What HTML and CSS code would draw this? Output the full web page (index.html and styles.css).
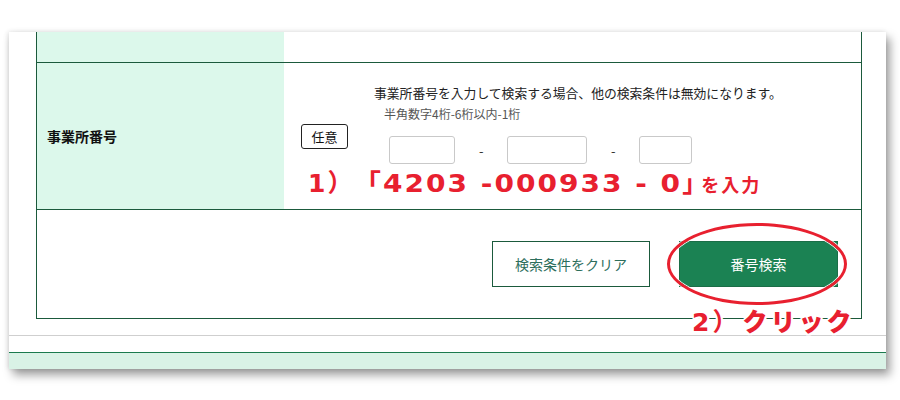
FILE: index.html
```html
<!DOCTYPE html>
<html lang="ja">
<head>
<meta charset="utf-8">
<link rel="stylesheet" href="styles.css">
</head>
<body>
<div class="card">
  <div class="table">
    <div class="row row-top">
      <div class="label"></div>
      <div class="value"></div>
    </div>
    <div class="row row-main">
      <div class="label"><span class="label-text">事業所番号</span></div>
      <div class="value value-main">
        <span class="badge">任意</span>
        <div class="field">
          <p class="note">事業所番号を入力して検索する場合、他の検索条件は無効になります。</p>
          <p class="hint">半角数字4桁-6桁以内-1桁</p>
          <div class="inputs">
            <span class="box box-a"></span>
            <span class="dash">-</span>
            <span class="box box-b"></span>
            <span class="dash">-</span>
            <span class="box box-c"></span>
          </div>
        </div>
      </div>
    </div>
    <div class="actions">
      <button class="btn btn-clear">検索条件をクリア</button>
      <button class="btn btn-search">番号検索</button>
    </div>
  </div>
  <div class="sep"></div>
  <div class="footer"></div>

  <div class="anno anno-1">1）<span class="anno-code">「4203 -000933 - 0</span><span class="anno-close">」</span><span class="anno-small">を入力</span></div>
  <div class="ring"></div>
  <div class="anno anno-2">2）<span class="anno-kana">クリック</span></div>
</div>
</body>
</html>
```

FILE: styles.css
```css
html, body {
  margin: 0;
  padding: 0;
  background: #ffffff;
}

body {
  width: 900px;
  height: 400px;
  overflow: hidden;
  font-family: "Noto Sans CJK JP", "Noto Sans", sans-serif;
  color: #222;
}

.card {
  position: relative;
  margin: 32px 0 0 9px;
  width: 877px;
  height: 337px;
  background: #fff;
  box-shadow: 4px 6px 9px rgba(0, 0, 0, 0.38), -1px 0 5px rgba(0, 0, 0, 0.12);
  display: flex;
  flex-direction: column;
}

.table {
  margin: 0 24px 0 27px;
  border: 1px solid #1b5a3c;
  border-top: none;
}

.row {
  display: grid;
  grid-template-columns: 247px 1fr;
  border-bottom: 1px solid #1b5a3c;
}

.row-top { height: 30px; }
.row-main { height: 146px; }

.label {
  background: #dcf8eb;
  display: flex;
  align-items: center;
  padding-left: 10px;
}

.label-text {
  font-size: 14px;
  font-weight: bold;
  color: #111;
}

.value-main {
  display: flex;
  align-items: center;
  padding-left: 17px;
}

.badge {
  box-sizing: border-box;
  width: 47px;
  height: 25px;
  border: 1px solid #222;
  border-radius: 3px;
  font-size: 13px;
  line-height: 23px;
  text-align: center;
  color: #111;
  margin-top: 1px;
}

.field {
  margin-left: 26px;
  align-self: flex-start;
  padding-top: 20px;
}

.note {
  margin: 0;
  font-size: 12.8px;
  line-height: 20px;
  color: #222;
  white-space: nowrap;
}

.hint {
  margin: 1px 0 0 10px;
  font-size: 12px;
  line-height: 20px;
  color: #555;
}

.inputs {
  display: flex;
  align-items: center;
  margin: 12px 0 0 15px;
  gap: 24px;
}

.box {
  box-sizing: border-box;
  height: 28px;
  border: 1px solid #c9c9c9;
  border-radius: 3px;
  background: #fff;
}

.box-a { width: 66px; }
.box-b { width: 80px; }
.box-c { width: 53px; }

.dash {
  font-size: 13px;
  color: #333;
  width: 4px;
}

.actions {
  height: 108px;
  display: flex;
  justify-content: flex-end;
  align-items: center;
  gap: 29px;
  padding-right: 23px;
}

.btn {
  box-sizing: border-box;
  width: 159px;
  height: 46px;
  font-family: "Noto Sans CJK JP", sans-serif;
  font-size: 14px;
  border-radius: 0;
  cursor: pointer;
}

.btn-clear {
  width: 158px;
  background: #fff;
  border: 1px solid #1b5a3c;
  color: #2d6e5c;
}

.btn-search {
  background: #1b8253;
  border: 1px solid #1b6e47;
  color: #fff;
}

.sep {
  margin-top: 16px;
  height: 1px;
  background: #cfcfcf;
}

.footer {
  margin-top: 16px;
  flex: 1;
  border-top: 1px solid #1b7a4e;
  background: #d9f2e6;
}

.anno {
  position: absolute;
  color: #e8202f;
  font-family: "DejaVu Sans", "Noto Sans CJK JP", sans-serif;
  font-weight: bold;
  white-space: nowrap;
  text-shadow:
    2px 0 0 #fff, -2px 0 0 #fff, 0 2px 0 #fff, 0 -2px 0 #fff,
    1.5px 1.5px 0 #fff, -1.5px 1.5px 0 #fff, 1.5px -1.5px 0 #fff, -1.5px -1.5px 0 #fff;
}

.anno-1 {
  left: 299px;
  top: 137px;
  font-size: 25px;
  line-height: 30px;
  letter-spacing: 2px;
}

.anno-code {
  display: inline-block;
  margin-left: -1px;
  margin-right: 35px;
  letter-spacing: 1.8px;
  transform: scaleX(1.12);
  transform-origin: left center;
}

.anno-close {
  letter-spacing: -6px;
}

.anno-small {
  font-size: 18px;
  letter-spacing: 2px;
}

.anno-2 {
  left: 683px;
  top: 276px;
  font-size: 25px;
  line-height: 30px;
  letter-spacing: 3px;
}

.anno-kana {
  font-weight: 900;
  margin-left: 2px;
}

.ring {
  position: absolute;
  left: 658px;
  top: 191px;
  width: 180px;
  height: 82px;
  box-sizing: border-box;
  border: 3px solid #e8202f;
  border-radius: 50%;
  box-shadow: 0 0 0 1px #fff, inset 0 0 0 1px #fff;
}
```
